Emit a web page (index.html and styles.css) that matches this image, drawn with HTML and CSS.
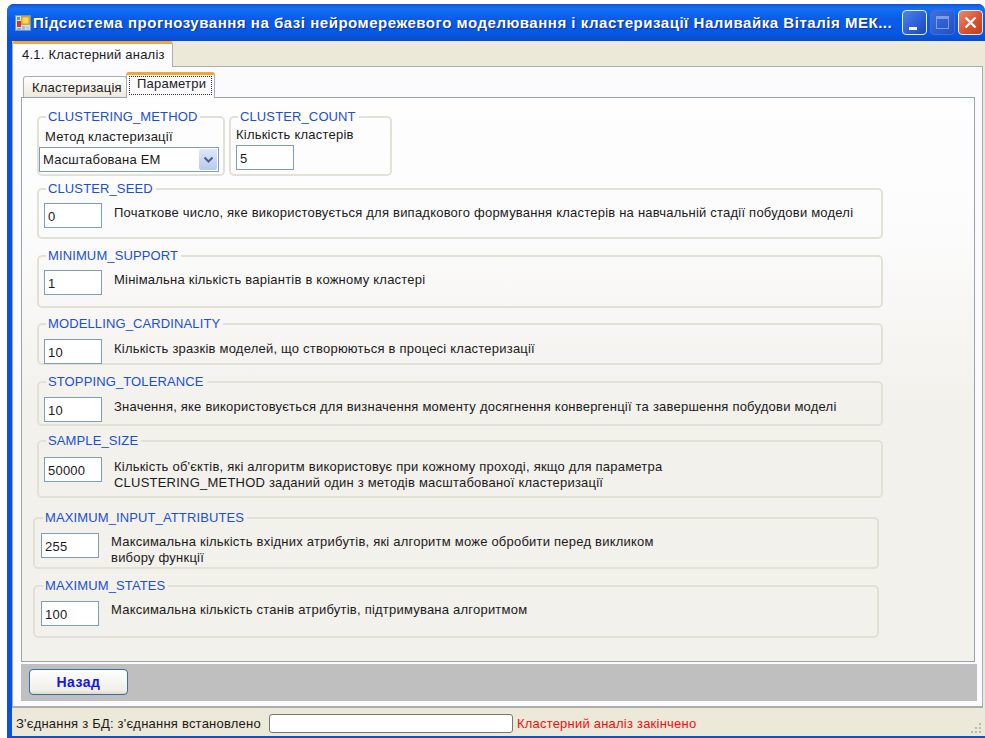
FILE: index.html
```html
<!DOCTYPE html>
<html lang="uk">
<head>
<meta charset="utf-8">
<title>Кластерний аналіз</title>
<link rel="stylesheet" href="styles.css">
</head>
<body>
<div class="window">
  <header class="titlebar">
    <svg class="app-icon" width="16" height="16" viewBox="0 0 16 16">
      <rect x="0.5" y="0.5" width="15" height="15" fill="#cfe0f5" stroke="#6f93c4"/>
      <rect x="2" y="2" width="3" height="3" fill="#5f8fd0"/>
      <rect x="6" y="1" width="9" height="9" fill="#d9a21e"/>
      <rect x="7.5" y="2.5" width="6" height="6" fill="#f8d75c"/>
      <rect x="2" y="6" width="4" height="6" fill="#d8352a"/>
      <rect x="2" y="13" width="4" height="2" fill="#8fb0d8"/>
      <rect x="7" y="11" width="3" height="4" fill="#9fbde2"/>
      <rect x="11" y="11" width="3" height="4" fill="#b7cde8"/>
    </svg>
    <h1 class="title">Підсистема прогнозування на базі нейромережевого моделювання і кластеризації Наливайка Віталія МЕК...</h1>
    <div class="caption-buttons">
      <button class="cap cap-min" aria-label="Згорнути"><span class="min-glyph"></span></button>
      <button class="cap cap-max" aria-label="Розгорнути"><span class="max-glyph"></span></button>
      <button class="cap cap-close" aria-label="Закрити">
        <svg width="15" height="15" viewBox="0 0 15 15"><path d="M2.5 2.5 12.5 12.5M12.5 2.5 2.5 12.5" stroke="#fff" stroke-width="2.4"/></svg>
      </button>
    </div>
  </header>

  <main class="client">
    <div class="outer-tabs">
      <div class="outer-tab">4.1. Кластерний аналіз</div>
    </div>
    <div class="outer-page">
      <div class="inner-tabs">
        <div class="inner-tab">Кластеризація</div>
        <div class="inner-tab active"><span class="focus">Параметри</span></div>
      </div>
      <div class="inner-page">
        <div class="row-top">
          <fieldset class="group group-method">
            <legend>CLUSTERING_METHOD</legend>
            <div class="caption">Метод кластеризації</div>
            <div class="combo">
              <span class="combo-text">Масштабована ЕМ</span>
              <span class="combo-btn">
                <svg width="11" height="8" viewBox="0 0 11 8"><path d="M1.5 1.5 5.5 5.5 9.5 1.5" fill="none" stroke="#4d6185" stroke-width="2"/></svg>
              </span>
            </div>
          </fieldset>
          <fieldset class="group group-count">
            <legend>CLUSTER_COUNT</legend>
            <div class="caption caption-count">Кількість кластерів</div>
            <div class="input input-count">5</div>
          </fieldset>
        </div>

        <fieldset class="group wide seed">
          <legend>CLUSTER_SEED</legend>
          <div class="param">
            <div class="input">0</div>
            <p>Початкове число, яке використовується для випадкового формування кластерів на навчальній стадії побудови моделі</p>
          </div>
        </fieldset>

        <fieldset class="group wide support">
          <legend>MINIMUM_SUPPORT</legend>
          <div class="param">
            <div class="input">1</div>
            <p>Мінімальна кількість варіантів в кожному кластері</p>
          </div>
        </fieldset>

        <fieldset class="group wide cardinality">
          <legend>MODELLING_CARDINALITY</legend>
          <div class="param">
            <div class="input">10</div>
            <p>Кількість зразків моделей, що створюються в процесі кластеризації</p>
          </div>
        </fieldset>

        <fieldset class="group wide tolerance">
          <legend>STOPPING_TOLERANCE</legend>
          <div class="param">
            <div class="input">10</div>
            <p>Значення, яке використовується для визначення моменту досягнення конвергенції та завершення побудови моделі</p>
          </div>
        </fieldset>

        <fieldset class="group wide sample">
          <legend>SAMPLE_SIZE</legend>
          <div class="param">
            <div class="input">50000</div>
            <p>Кількість об'єктів, які алгоритм використовує при кожному проході, якщо для параметра<br>CLUSTERING_METHOD заданий один з методів масштабованої кластеризації</p>
          </div>
        </fieldset>

        <fieldset class="group wide shifted attrs">
          <legend>MAXIMUM_INPUT_ATTRIBUTES</legend>
          <div class="param">
            <div class="input">255</div>
            <p>Максимальна кількість вхідних атрибутів, які алгоритм може обробити перед викликом<br>вибору функції</p>
          </div>
        </fieldset>

        <fieldset class="group wide shifted states">
          <legend>MAXIMUM_STATES</legend>
          <div class="param">
            <div class="input">100</div>
            <p>Максимальна кількість станів атрибутів, підтримувана алгоритмом</p>
          </div>
        </fieldset>
      </div>
      <div class="action-bar">
        <button class="back">Назад</button>
      </div>
    </div>
    <footer class="statusbar">
      <span class="status-text">З'єднання з БД: з'єднання встановлено</span>
      <span class="progress"></span>
      <span class="status-done">Кластерний аналіз закінчено</span>
      <svg class="grip" width="12" height="12" viewBox="0 0 12 12" fill="#bdb9a6">
        <rect x="9" y="1" width="2" height="2"/><rect x="5" y="5" width="2" height="2"/><rect x="9" y="5" width="2" height="2"/>
        <rect x="1" y="9" width="2" height="2"/><rect x="5" y="9" width="2" height="2"/><rect x="9" y="9" width="2" height="2"/>
      </svg>
    </footer>
  </main>
</div>
</body>
</html>
```
FILE: styles.css
```css
* { box-sizing: border-box; }

html, body { height: 100%; }

body {
  margin: 0;
  padding: 4px 0 0 7px;
  background: #fff;
  overflow: hidden;
  font: 13px "Liberation Sans", Arial, sans-serif;
  letter-spacing: 0.22px;
  color: #1a1a1a;
}

.window {
  width: 978px;
  height: 734px;
  display: flex;
  flex-direction: column;
  background: #0a50e0;
  border-radius: 7px 7px 0 0;
  padding: 0 0 2px 5px;
}

/* Title bar */
.titlebar {
  height: 37px;
  margin-left: -5px;
  padding: 0 2px 0 8px;
  display: flex;
  align-items: center;
  gap: 2px;
  border-radius: 7px 7px 0 0;
  background: linear-gradient(#0a55d8 0, #1470f4 12%, #0a5ce8 40%, #0857e4 80%, #074ccc 100%);
}

.app-icon { flex: none; margin-top: 1px; }

.title {
  margin: 0;
  flex: 1;
  min-width: 0;
  font: bold 15px "Liberation Sans", Arial, sans-serif;
  letter-spacing: 0.53px;
  color: #fff;
  text-shadow: 1px 1px 1px #0a2f9a;
  white-space: nowrap;
  overflow: hidden;
}

.caption-buttons { display: flex; gap: 3px; flex: none; }

.cap {
  width: 25px;
  height: 25px;
  padding: 0;
  border: 1px solid #e6eefc;
  border-radius: 4px;
  display: flex;
  align-items: center;
  justify-content: center;
  position: relative;
}

.cap-min { background: linear-gradient(135deg, #4f82ea, #2a5fd8 60%, #1d47b8); }

.min-glyph {
  width: 8px;
  height: 3px;
  background: #fff;
  position: absolute;
  left: 6px;
  bottom: 4px;
}

.cap-max {
  background: linear-gradient(135deg, #3f6fdc, #2c5cd0 60%, #2550be);
  border-color: #3f6ed8;
}

.max-glyph {
  width: 13px;
  height: 13px;
  border: 1px solid #7d9de8;
  border-top-width: 3px;
}

.cap-close { background: linear-gradient(135deg, #ee8a66, #dc5230 55%, #c23c1c); }

/* Client area */
.client {
  flex: 1;
  min-height: 0;
  display: flex;
  flex-direction: column;
  background: #ece9d8;
  margin-right: 0;
}

.outer-tabs {
  height: 25px;
  flex: none;
  display: flex;
  align-items: flex-end;
}

.outer-tab {
  width: 161px;
  height: 26px;
  margin-bottom: -1px;
  padding: 3px 0 0 9px;
  background: #fcfcfe;
  border: 1px solid #a9aeb0;
  border-bottom: 0;
  border-top: 3px solid #f2a53a;
  border-radius: 3px 3px 0 0;
  position: relative;
  z-index: 1;
  line-height: 15px;
  white-space: nowrap;
}

.outer-page {
  flex: none;
  height: 642px;
  margin-right: 2px;
  padding: 4px 5px 4px 8px;
  border: 1px solid #a9aeb0;
  border-bottom-width: 2px;
  background: #fbfbfd;
  display: flex;
  flex-direction: column;
}

.inner-tabs {
  height: 26px;
  flex: none;
  padding-left: 2px;
  display: flex;
  align-items: flex-end;
}

.inner-tab {
  width: 104px;
  height: 21px;
  padding: 3px 0 0 8px;
  background: linear-gradient(#fff, #ece9dc);
  border: 1px solid #a9aeb0;
  border-bottom: 0;
  border-radius: 3px 3px 0 0;
  line-height: 15px;
  white-space: nowrap;
}

.inner-tab.active {
  width: 89px;
  height: 26px;
  margin-bottom: -1px;
  margin-left: -1px;
  padding: 1px 2px 0 2px;
  background: #fcfcfe;
  border-top: 3px solid #f2a53a;
  position: relative;
  z-index: 1;
}

.focus {
  display: block;
  padding: 0 0 0 7px;
  height: 19px;
  border: 1px dotted #333;
  line-height: 14px;
}

.inner-page {
  height: 565px;
  flex: none;
  margin-right: 2px;
  padding: 12px 0 0 15px;
  border: 1px solid #9aa4a8;
  background: linear-gradient(#fefefe 0, #fbfbfb 25%, #f3f1ec 55%);
}

.row-top { display: flex; gap: 4px; }

.group {
  margin: 0;
  padding: 0;
  min-width: 0;
  border: 2px solid #e2e1d6;
  border-radius: 5px;
  position: relative;
}

.group legend {
  padding: 0 3px 0 2px;
  margin-left: 7px;
  color: #1a4fd8;
  font-size: 13px;
  line-height: 14px;
  letter-spacing: 0.12px;
  white-space: nowrap;
}

.group-method { width: 188px; height: 66px; }
.group-count { width: 163px; height: 66px; }

.caption { margin: 6px 0 0 6px; line-height: 14px; height: 17px; }
.caption-count { margin: 4px 0 0 5px; }

.combo {
  width: 180px;
  height: 25px;
  border: 1px solid #7f9db9;
  background: #fff;
  display: flex;
  align-items: center;
  justify-content: space-between;
  padding: 0 1px 0 3px;
}

.combo-btn {
  width: 18px;
  height: 21px;
  border-radius: 2px;
  background: linear-gradient(#dfe8fb, #b6c9f0);
  display: flex;
  align-items: center;
  justify-content: center;
}

.input {
  width: 58px;
  height: 25px;
  flex: none;
  padding: 6px 0 0 3px;
  background: #fff;
  border: 1px solid #7f9db9;
  line-height: 14px;
}

.input-count { margin: 0 0 0 5px; }

.wide { width: 846px; }
.wide.shifted { margin-left: -4px; }
.shifted legend { margin-left: 8px; }

.seed { height: 57px; margin-top: 6px; }
.support { height: 59px; margin-top: 10px; }
.cardinality { height: 48px; margin-top: 9px; }
.tolerance { height: 51px; margin-top: 10px; }
.sample { height: 64px; margin-top: 8px; }
.attrs { height: 58px; margin-top: 13px; }
.states { height: 59px; margin-top: 10px; }

.param {
  display: flex;
  align-items: flex-start;
  gap: 12px;
  padding: 7px 0 0 5px;
}

.cardinality .param, .tolerance .param { padding-top: 8px; }
.sample .param { padding-top: 9px; }
.shifted .param { padding: 8px 0 0 6px; }

.param p { margin: 0; padding-top: 2px; line-height: 16px; white-space: nowrap; }
.shifted .param p { padding-top: 1px; }

/* Bottom button strip */
.action-bar {
  height: 37px;
  margin-top: 2px;
  flex: none;
  padding: 5px 0 0 8px;
  background: #bfbfbf;
}

.back {
  display: block;
  width: 99px;
  height: 26px;
  padding: 0;
  border: 1px solid #3a6ea5;
  border-radius: 4px;
  background: linear-gradient(#fefefe, #f0efe8 85%, #dcd8c8);
  color: #1414f0;
  font: bold 14px "Liberation Sans", Arial, sans-serif;
  letter-spacing: 0.5px;
}

/* Status bar */
.statusbar {
  flex: 1;
  display: flex;
  align-items: center;
  padding: 3px 3px 0 4px;
  position: relative;
}

.status-text { white-space: nowrap; margin-right: 8px; }

.progress {
  width: 244px;
  height: 19px;
  flex: none;
  background: #fff;
  border: 1px solid #77776c;
  border-radius: 3px;
}

.status-done { color: #f01010; margin-left: 4px; white-space: nowrap; }

.grip { margin-left: auto; align-self: flex-end; margin-bottom: 2px; }
```
